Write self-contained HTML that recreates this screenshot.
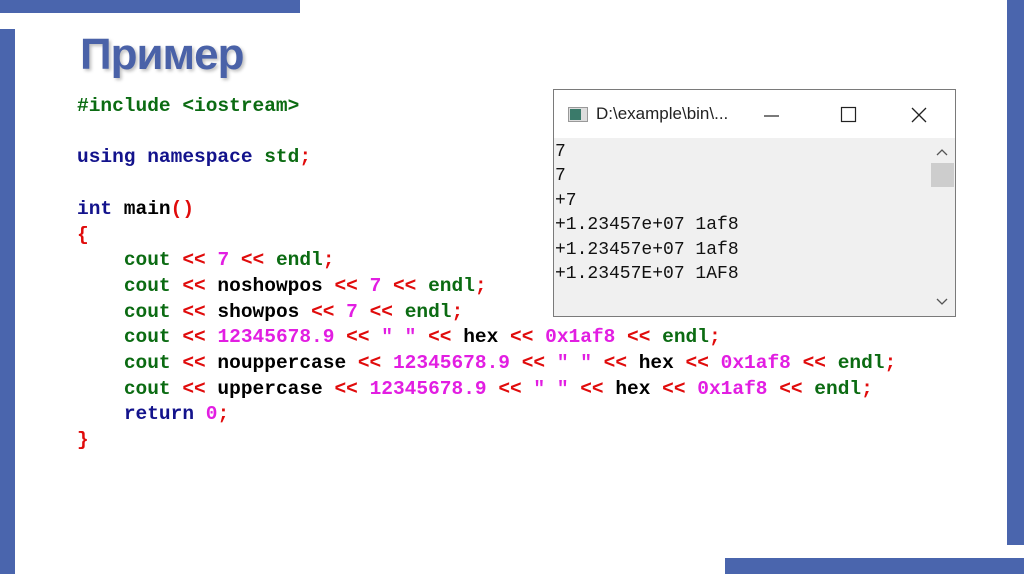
<!DOCTYPE html>
<html><head><meta charset="utf-8"><style>
body{margin:0;width:1024px;height:574px;position:relative;background:#fff;overflow:hidden;font-family:"Liberation Sans",sans-serif}
.b{position:absolute;background:#4a65ad}
.t{position:absolute;left:80px;top:30px;font-size:44px;font-weight:bold;color:#4a62a8;text-shadow:2px 2px 3px rgba(0,0,0,.25);letter-spacing:-1px}
pre{position:absolute;left:77px;top:94px;margin:0;font-family:"Liberation Mono",monospace;font-weight:bold;font-size:19.5px;line-height:25.7px;color:#000}
.g{color:#0b6b12}.k{color:#13138c}.r{color:#e00b0b}.m{color:#e21ee2}
.w{position:absolute;left:553px;top:89px;width:401px;height:226px;border:1px solid #7a7a7a;background:#f0f0f0}
.tb{position:absolute;left:0;top:0;width:401px;height:48px;background:#fff}
.tt{position:absolute;left:42px;top:14px;font-size:17px;color:#222}
pre.o{position:absolute;left:1px;top:50px;margin:0;font-family:"Liberation Mono",monospace;font-weight:normal;font-size:18px;line-height:24.4px;color:#111}
.sb{position:absolute;left:376px;top:48px;width:25px;height:178px;background:#f0f0f0}
</style></head><body>
<div class="b" style="left:0;top:0;width:300px;height:13px"></div>
<div class="b" style="left:0;top:29px;width:15px;height:545px"></div>
<div class="b" style="left:1007px;top:0;width:17px;height:545px"></div>
<div class="b" style="left:725px;top:558px;width:299px;height:16px"></div>
<div class="t">Пример</div>
<pre><span class="g">#include &lt;iostream&gt;</span>

<span class="k">using namespace</span> <span class="g">std</span><span class="r">;</span>

<span class="k">int</span> main<span class="r">()</span>
<span class="r">{</span>
    <span class="g">cout</span> <span class="r">&lt;&lt;</span> <span class="m">7</span> <span class="r">&lt;&lt;</span> <span class="g">endl</span><span class="r">;</span>
    <span class="g">cout</span> <span class="r">&lt;&lt;</span> noshowpos <span class="r">&lt;&lt;</span> <span class="m">7</span> <span class="r">&lt;&lt;</span> <span class="g">endl</span><span class="r">;</span>
    <span class="g">cout</span> <span class="r">&lt;&lt;</span> showpos <span class="r">&lt;&lt;</span> <span class="m">7</span> <span class="r">&lt;&lt;</span> <span class="g">endl</span><span class="r">;</span>
    <span class="g">cout</span> <span class="r">&lt;&lt;</span> <span class="m">12345678.9</span> <span class="r">&lt;&lt;</span> <span class="m">" "</span> <span class="r">&lt;&lt;</span> hex <span class="r">&lt;&lt;</span> <span class="m">0x1af8</span> <span class="r">&lt;&lt;</span> <span class="g">endl</span><span class="r">;</span>
    <span class="g">cout</span> <span class="r">&lt;&lt;</span> nouppercase <span class="r">&lt;&lt;</span> <span class="m">12345678.9</span> <span class="r">&lt;&lt;</span> <span class="m">" "</span> <span class="r">&lt;&lt;</span> hex <span class="r">&lt;&lt;</span> <span class="m">0x1af8</span> <span class="r">&lt;&lt;</span> <span class="g">endl</span><span class="r">;</span>
    <span class="g">cout</span> <span class="r">&lt;&lt;</span> uppercase <span class="r">&lt;&lt;</span> <span class="m">12345678.9</span> <span class="r">&lt;&lt;</span> <span class="m">" "</span> <span class="r">&lt;&lt;</span> hex <span class="r">&lt;&lt;</span> <span class="m">0x1af8</span> <span class="r">&lt;&lt;</span> <span class="g">endl</span><span class="r">;</span>
    <span class="k">return</span> <span class="m">0</span><span class="r">;</span>
<span class="r">}</span></pre>
<div class="w">
<div class="tb">
<svg style="position:absolute;left:14px;top:17px" width="20" height="15"><rect x="0.5" y="0.5" width="19" height="14" fill="#ddd" stroke="#999"/><rect x="2" y="2" width="11" height="11" fill="#3a7a6a"/></svg>
<div class="tt">D:\example\bin\...</div>
<svg style="position:absolute;left:210px;top:14px" width="190" height="22"><line x1="0" y1="12" x2="15" y2="12" stroke="#222" stroke-width="1.2"/><rect x="77.5" y="3.5" width="14" height="14" fill="none" stroke="#222" stroke-width="1.2"/><path d="M148 4L162 18M162 4L148 18" stroke="#222" stroke-width="1.3"/></svg>
</div>
<pre class="o">7
7
+7
+1.23457e+07 1af8
+1.23457e+07 1af8
+1.23457E+07 1AF8</pre>
<div class="sb">
<svg style="position:absolute;left:0;top:0" width="25" height="178"><path d="M7 17L12 12L17 17" fill="none" stroke="#555" stroke-width="1.3"/><rect x="1" y="25" width="23" height="24" fill="#cdcdcd"/><path d="M7 161L12 166L17 161" fill="none" stroke="#555" stroke-width="1.3"/></svg>
</div>
</div>
</body></html>
